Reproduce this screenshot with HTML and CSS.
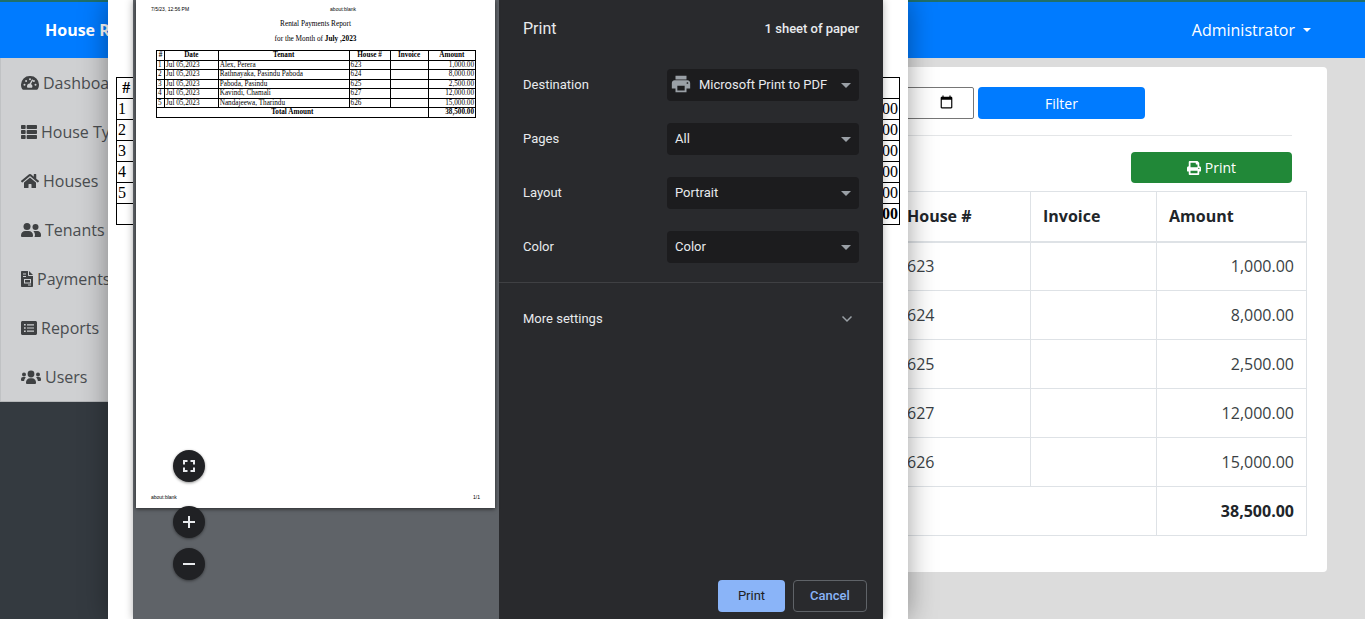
FILE: index.html
```html
<!DOCTYPE html>
<html lang="en">
<head>
    <meta charset="UTF-8">
    <meta name="viewport" content="width=device-width, initial-scale=1.0">
    <title>House Rental Management System</title>
    <link rel="stylesheet" href="styles.css">
</head>
<body>
    <header class="navbar">
        <span class="brand">House Rental Management System</span>
        <span class="user-menu">Administrator<i class="user-caret"></i></span>
    </header>

    <div class="layout">
        <aside class="sidebar">
            <nav class="side-nav">
                <a class="side-item">
                    <svg class="side-icon" width="18" height="16" viewBox="0 0 18 16"><path d="M9 1a8.6 8.6 0 0 0-9 8.700c0 1.700.5 3.200 1.300 4.500.2.300.5.500.9.500h13.600c.4 0 .7-.2.900-.5.800-1.300 1.300-2.800 1.300-4.500A8.600 8.600 0 0 0 9 1zm0 2.300a1 1 0 1 1 0 2 1 1 0 0 1 0-2zM3.500 10.700a1 1 0 1 1 0-2 1 1 0 0 1 0 2zm1.600-3.700a1 1 0 1 1 0-2 1 1 0 0 1 0 2zm6.900 5.700H6.500c-.3-.4-.5-.9-.5-1.400 0-1.500 1.200-2.700 2.700-2.800l2.100-3.700a.7.700 0 0 1 1.200.7l-2 3.600c.8.500 1.400 1.300 1.400 2.200 0 .5-.1 1-.4 1.400zm.9-5.700a1 1 0 1 1 0-2 1 1 0 0 1 0 2zm1.600 3.700a1 1 0 1 1 0-2 1 1 0 0 1 0 2z"/></svg>
                    Dashboard
                </a>
                <a class="side-item">
                    <svg class="side-icon" width="16" height="16" viewBox="0 0 512 512"><path d="M149 216v80c0 13-11 24-24 24H24c-13 0-24-11-24-24v-80c0-13 11-24 24-24h101c13 0 24 11 24 24zM0 376v80c0 13 11 24 24 24h101c13 0 24-11 24-24v-80c0-13-11-24-24-24H24c-13 0-24 11-24 24zM125 32H24C11 32 0 43 0 56v80c0 13 11 24 24 24h101c13 0 24-11 24-24V56c0-13-11-24-24-24zm80 448h283c13 0 24-11 24-24v-80c0-13-11-24-24-24H205c-13 0-24 11-24 24v80c0 13 11 24 24 24zm-24-424v80c0 13 11 24 24 24h283c13 0 24-11 24-24V56c0-13-11-24-24-24H205c-13 0-24 11-24 24zm24 264h283c13 0 24-11 24-24v-80c0-13-11-24-24-24H205c-13 0-24 11-24 24v80c0 13 11 24 24 24z"/></svg>
                    House Types
                </a>
                <a class="side-item">
                    <svg class="side-icon" width="18" height="16" viewBox="0 0 576 512"><path d="M280.370 148.260L96 300.110V464a16 16 0 0 0 16 16l112.060-.29a16 16 0 0 0 15.920-16V368a16 16 0 0 1 16-16h64a16 16 0 0 1 16 16v95.640a16 16 0 0 0 16 16.050L464 480a16 16 0 0 0 16-16V300L295.670 148.260a12.190 12.190 0 0 0-15.300 0zM571.600 251.470L488 182.560V44.050a12 12 0 0 0-12-12h-56a12 12 0 0 0-12 12v72.610L318.470 43a48 48 0 0 0-61 0L4.340 251.470a12 12 0 0 0-1.600 16.900l25.500 31A12 12 0 0 0 45.150 301l235.220-193.740a12.190 12.190 0 0 1 15.300 0L530.900 301a12 12 0 0 0 16.900-1.600l25.500-31a12 12 0 0 0-1.700-16.930z"/></svg>
                    Houses
                </a>
                <a class="side-item">
                    <svg class="side-icon" width="20" height="16" viewBox="0 0 20 16"><circle cx="6" cy="4.500" r="3.500"/><circle cx="14.500" cy="5" r="3"/><path d="M0 13.200C0 10.800 2 9 4.200 9h3.600C10 9 12 10.800 12 13.200V14a1 1 0 0 1-1 1H1a1 1 0 0 1-1-1z"/><path d="M13.500 15h5.500a1 1 0 0 0 1-1v-1.200c0-2-1.500-3.800-3.500-3.800h-3.200c-.3 0-.6.100-.9.200 1 1 1.600 2.400 1.600 4z"/></svg>
                    Tenants
                </a>
                <a class="side-item">
                    <svg class="side-icon" width="12" height="16" viewBox="0 0 12 16"><path fill-rule="evenodd" d="M0 .8C0 .4.300 0 .8 0H7v4c0 .6.400 1 1 1h4v10.200c0 .4-.3.800-.8.800H.8c-.5 0-.8-.4-.8-.8zM2 2.500v1h3v-1zm0 2.500v1h3V5zm1 3v4.500h7V8zm1 1h5v2.500H4zm3 4.500v1h3v-1z"/><path d="M8 0l4 4H8z"/></svg>
                    Payments
                </a>
                <a class="side-item">
                    <svg class="side-icon" width="16" height="16" viewBox="0 0 16 16"><path fill-rule="evenodd" d="M1.500 1h13c.8 0 1.500.7 1.500 1.500v11c0 .8-.7 1.500-1.500 1.500h-13C.7 15 0 14.300 0 13.500v-11C0 1.700.7 1 1.500 1zM3 4v1.600h1.700V4zm3 .2v1.200h7V4.200zM3 7.200v1.600h1.700V7.200zm3 .2v1.200h7V7.400zM3 10.400V12h1.700v-1.600zm3 .2v1.200h7v-1.200z"/></svg>
                    Reports
                </a>
                <a class="side-item">
                    <svg class="side-icon" width="20" height="16" viewBox="0 0 20 16"><circle cx="10" cy="5" r="3.400"/><circle cx="3" cy="5.500" r="2"/><circle cx="17" cy="5.500" r="2"/><path d="M5 13.200C5 11 6.800 9.200 9 9.200h2c2.200 0 4 1.800 4 4V14a1 1 0 0 1-1 1H6a1 1 0 0 1-1-1z"/><path d="M4.800 8.400A3 3 0 0 0 4 8H2a2 2 0 0 0-2 2v1a1 1 0 0 0 1 1h2.100c.2-1.500.8-2.800 1.700-3.600zM15.200 8.400c.2-.2.500-.4.800-.4h2a2 2 0 0 1 2 2v1a1 1 0 0 1-1 1h-2.100c-.2-1.500-.8-2.800-1.700-3.600z"/></svg>
                    Users
                </a>
            </nav>
        </aside>

        <main class="content">
            <section class="card">
                <div class="filter-bar">
                    <input class="month-input" type="month">
                    <button class="btn-filter">Filter</button>
                </div>
                <hr class="card-rule">
                <div class="print-bar">
                    <button class="btn-print">
                        <svg width="14" height="14" viewBox="0 0 512 512" fill="#fff"><path d="M448 192V77.250c0-8.490-3.370-16.620-9.370-22.630L393.370 9.370c-6-6-14.140-9.370-22.630-9.370H96C78.330 0 64 14.330 64 32v160c-35.350 0-64 28.650-64 64v112c0 8.840 7.160 16 16 16h48v96c0 17.670 14.330 32 32 32h320c17.670 0 32-14.330 32-32v-96h48c8.840 0 16-7.160 16-16V256c0-35.350-28.650-64-64-64zm-64 256H128v-96h256v96zm0-224H128V64h192v48c0 8.840 7.160 16 16 16h48v96zm48 72c-13.250 0-24-10.750-24-24 0-13.260 10.750-24 24-24s24 10.740 24 24c0 13.250-10.750 24-24 24z"/></svg>
                        Print
                    </button>
                </div>
                <table class="data-table">
                    <thead>
                        <tr><th class="col-no"></th><th class="col-date"></th><th class="col-tenant"></th><th class="col-house">House #</th><th class="col-invoice">Invoice</th><th class="col-amount">Amount</th></tr>
                    </thead>
                    <tbody>
                        <tr><td></td><td></td><td></td><td>623</td><td></td><td class="num">1,000.00</td></tr>
                        <tr><td></td><td></td><td></td><td>624</td><td></td><td class="num">8,000.00</td></tr>
                        <tr><td></td><td></td><td></td><td>625</td><td></td><td class="num">2,500.00</td></tr>
                        <tr><td></td><td></td><td></td><td>627</td><td></td><td class="num">12,000.00</td></tr>
                        <tr><td></td><td></td><td></td><td>626</td><td></td><td class="num">15,000.00</td></tr>
                        <tr><td class="total" colspan="5"></td><td class="num total">38,500.00</td></tr>
                    </tbody>
                </table>
            </section>
        </main>
    </div>

    <!-- print window opened over the page -->
    <div class="print-window">
        <table class="report-table report-large">
            <thead>
                <tr><th class="r-no">#</th><th class="r-date"></th><th class="r-tenant"></th><th class="r-house"></th><th class="r-invoice"></th><th class="r-amount"></th></tr>
            </thead>
            <tbody>
                <tr><td>1</td><td></td><td></td><td></td><td></td><td class="num">1,000.00</td></tr>
                <tr><td>2</td><td></td><td></td><td></td><td></td><td class="num">8,000.00</td></tr>
                <tr><td>3</td><td></td><td></td><td></td><td></td><td class="num">2,500.00</td></tr>
                <tr><td>4</td><td></td><td></td><td></td><td></td><td class="num">12,000.00</td></tr>
                <tr><td>5</td><td></td><td></td><td></td><td></td><td class="num">15,000.00</td></tr>
                <tr><th colspan="5"></th><th class="num">38,500.00</th></tr>
            </tbody>
        </table>

        <div class="print-dialog">
            <div class="preview">
                <div class="paper">
                    <div class="paper-head"><span>7/5/23, 12:56 PM</span><span class="paper-url">about:blank</span></div>
                    <p class="paper-title">Rental Payments Report</p>
                    <p class="paper-title paper-sub">for the Month of <b>July ,2023</b></p>
                    <table class="report-table report-small">
                        <thead>
                            <tr><th class="r-no">#</th><th class="r-date">Date</th><th class="r-tenant">Tenant</th><th class="r-house">House #</th><th class="r-invoice">Invoice</th><th class="r-amount">Amount</th></tr>
                        </thead>
                        <tbody>
                            <tr><td>1</td><td>Jul 05,2023</td><td>Alex, Perera</td><td>623</td><td></td><td class="num">1,000.00</td></tr>
                            <tr><td>2</td><td>Jul 05,2023</td><td>Rathnayaka, Pasindu Paboda</td><td>624</td><td></td><td class="num">8,000.00</td></tr>
                            <tr><td>3</td><td>Jul 05,2023</td><td>Paboda, Pasindu</td><td>625</td><td></td><td class="num">2,500.00</td></tr>
                            <tr><td>4</td><td>Jul 05,2023</td><td>Kavindi, Chamali</td><td>627</td><td></td><td class="num">12,000.00</td></tr>
                            <tr><td>5</td><td>Jul 05,2023</td><td>Nandajeewa, Tharindu</td><td>626</td><td></td><td class="num">15,000.00</td></tr>
                            <tr><th colspan="5">Total Amount</th><th class="num">38,500.00</th></tr>
                        </tbody>
                    </table>
                    <div class="paper-foot"><span>about:blank</span><span>1/1</span></div>
                </div>
                <button class="zoom-btn zoom-fit">
                    <svg width="16" height="16" viewBox="0 0 16 16" fill="none" stroke="#e8eaed" stroke-width="2"><path d="M3 6.500V3h3.500M9.500 3H13v3.500M13 9.500V13H9.500M6.500 13H3V9.500"/></svg>
                </button>
                <button class="zoom-btn zoom-in">
                    <svg width="16" height="16" viewBox="0 0 16 16" fill="none" stroke="#e8eaed" stroke-width="2"><path d="M8 2v12M2 8h12"/></svg>
                </button>
                <button class="zoom-btn zoom-out">
                    <svg width="16" height="16" viewBox="0 0 16 16" fill="none" stroke="#e8eaed" stroke-width="2"><path d="M2 8h12"/></svg>
                </button>
            </div>

            <div class="settings">
                <div class="settings-head">
                    <h1 class="settings-title">Print</h1>
                    <span class="sheet-count">1 sheet of paper</span>
                </div>
                <div class="settings-rows">
                    <div class="setting-row">
                        <span class="setting-label">Destination</span>
                        <div class="select select-dest">
                            <svg width="22" height="22" viewBox="0 0 24 24" fill="#9aa0a6"><path d="M19 8H5c-1.660 0-3 1.340-3 3v6h4v4h12v-4h4v-6c0-1.660-1.340-3-3-3zm-3 11H8v-5h8v5zm3-7c-.55 0-1-.45-1-1s.45-1 1-1 1 .45 1 1-.45 1-1 1zm-1-9H6v4h12V3z"/></svg>
                            <span>Microsoft Print to PDF</span>
                        </div>
                    </div>
                    <div class="setting-row">
                        <span class="setting-label">Pages</span>
                        <div class="select"><span>All</span></div>
                    </div>
                    <div class="setting-row">
                        <span class="setting-label">Layout</span>
                        <div class="select"><span>Portrait</span></div>
                    </div>
                    <div class="setting-row">
                        <span class="setting-label">Color</span>
                        <div class="select"><span>Color</span></div>
                    </div>
                </div>
                <div class="more-settings">
                    <span>More settings</span>
                    <svg width="12" height="8" viewBox="0 0 12 8" fill="none" stroke="#9aa0a6" stroke-width="1.500"><path d="M1.500 1.500L6 6l4.500-4.500"/></svg>
                </div>
                <div class="settings-foot">
                    <button class="dlg-btn dlg-print">Print</button>
                    <button class="dlg-btn dlg-cancel">Cancel</button>
                </div>
            </div>
        </div>
    </div>
</body>
</html>
```

FILE: styles.css
```css
* {
    box-sizing: border-box;
}
html, body {
    height: 100%;
}
body {
    margin: 0;
    overflow: hidden;
    position: relative;
    background: #dcdcdc;
    color: #212529;
    font-family: "Open Sans", sans-serif;
    font-size: 16px;
}

/* navbar */
.navbar {
    height: 58px;
    display: flex;
    align-items: center;
    justify-content: space-between;
    padding: 0 54px 0 45px;
    background: #007bff;
    border-top: 2px solid #1f6f6b;
    color: #fff;
}
.brand {
    font-weight: 700;
}
.user-menu {
    display: flex;
    align-items: center;
}
.user-caret {
    margin-left: 8px;
    border-top: 4.800px solid #fff;
    border-left: 4.800px solid transparent;
    border-right: 4.800px solid transparent;
}

/* page under the print window */
.layout {
    display: flex;
    height: 561px;
}
.sidebar {
    width: 250px;
    flex: none;
    background: #343a40;
}
.side-nav {
    background: #cfd0d2;
    border-bottom: 1px solid #b5b7b9;
}
.side-item {
    height: 49px;
    display: flex;
    align-items: center;
    gap: 4px;
    padding-left: 21px;
    color: #4a4d50;
    border-left: 1px solid #c0c2c4;
    white-space: nowrap;
}
.side-icon {
    fill: #3f4143;
    margin-left: -1px;
    flex: none;
}
.content {
    flex: 1;
    padding: 9px 38px 0 19px;
}
.card {
    height: 505px;
    padding: 20px;
    background: #fff;
    border-radius: 4px;
}
.filter-bar {
    display: flex;
    gap: 4px;
    padding-left: 411px;
}
.month-input {
    width: 274px;
    height: 32px;
    padding: 0 19px 0 8px;
    border: 1px solid #767676;
    border-radius: 2px;
    font-family: "Open Sans", sans-serif;
    font-size: 14px;
}
.month-input::-webkit-calendar-picker-indicator {
    width: 15px;
    height: 16px;
    padding: 0;
    margin: 0;
}
.btn-filter {
    width: 167px;
    height: 32px;
    background: #007bff;
    color: #fff;
    border: 0;
    border-radius: 4px;
    font-family: "Open Sans", sans-serif;
    font-size: 14px;
}
.card-rule {
    margin: 16px 15px 16px 0;
    border: 0;
    border-top: 1px solid #e4e6e8;
}
.print-bar {
    display: flex;
    justify-content: flex-end;
    padding-right: 15px;
    margin-bottom: 8px;
}
.btn-print {
    width: 161px;
    height: 31px;
    display: flex;
    align-items: center;
    justify-content: center;
    gap: 4px;
    background: #218838;
    color: #fff;
    border: 0;
    border-radius: 4px;
    font-family: "Open Sans", sans-serif;
    font-size: 14px;
}
.data-table {
    width: 1017px;
    table-layout: fixed;
    border-collapse: collapse;
}
.data-table th, .data-table td {
    height: 49px;
    padding: 0 12px;
    border: 1px solid #dee2e6;
    text-align: left;
    color: #212529;
}
.data-table td {
    color: #3a3f44;
}
.data-table thead th {
    height: 50px;
    border-bottom-width: 2px;
}
.data-table .num {
    text-align: right;
}
.data-table .total {
    font-weight: 700;
    color: #212529;
}
.col-no { width: 40px; }
.col-date { width: 160px; }
.col-tenant { width: 405px; }
.col-house { width: 136px; }
.col-invoice { width: 126px; }
.col-amount { width: 150px; }

/* print window */
.print-window {
    position: absolute;
    top: 0;
    left: 108px;
    width: 800px;
    height: 619px;
    padding: 77px 8px 0;
    background: #fff;
    box-shadow: 0 0 26px rgba(0, 0, 0, .38);
}
.report-table {
    width: 100%;
    table-layout: fixed;
    border-collapse: collapse;
    font-family: "Liberation Serif", serif;
    color: #000;
}
.report-table th, .report-table td {
    border: 1px solid #000;
    white-space: nowrap;
}
.report-table .num {
    text-align: right;
}
.report-large {
    font-size: 16px;
}
.report-large th, .report-large td {
    height: 21px;
    padding: 1px;
    line-height: 18px;
}
.report-small {
    width: 320px;
    margin-left: 5px;
    font-size: 7.200px;
}
.report-small th, .report-small td {
    height: 9.500px;
    padding: 0 1px;
    line-height: 8px;
}
.r-no { width: 2.500%; }
.r-date { width: 16.800%; }
.r-tenant { width: 40.900%; }
.r-house { width: 12.800%; }
.r-invoice { width: 11.900%; }
.r-amount { width: 14.800%; }

.print-dialog {
    position: absolute;
    top: 0;
    left: 25px;
    width: 750px;
    height: 619px;
    display: flex;
    box-shadow: 0 0 8px rgba(0, 0, 0, .3);
}
.preview {
    position: relative;
    width: 366px;
    flex: none;
    background: #5f6368;
    padding-left: 3px;
}
.paper {
    width: 359px;
    height: 508px;
    display: flex;
    flex-direction: column;
    padding: 6px 15px 8px;
    background: #fff;
    box-shadow: 0 1px 4px rgba(0, 0, 0, .6);
    color: #000;
}
.paper-head, .paper-foot {
    display: flex;
    font-family: "Liberation Sans", sans-serif;
    font-size: 5px;
    line-height: 6px;
}
.paper-url {
    margin-left: 141px;
}
.paper-foot {
    margin-top: auto;
    justify-content: space-between;
}
.paper-title {
    margin: 7px 0 0;
    text-align: center;
    font-family: "Liberation Serif", serif;
    font-size: 7.300px;
    line-height: 9px;
}
.paper-sub {
    margin-top: 6px;
    margin-bottom: 7px;
}
.zoom-btn {
    position: absolute;
    left: 40px;
    width: 32px;
    height: 32px;
    display: flex;
    align-items: center;
    justify-content: center;
    padding: 0;
    border: 0;
    border-radius: 50%;
    background: #202124;
    box-shadow: 0 1px 3px rgba(0, 0, 0, .45);
}
.zoom-fit { top: 450px; }
.zoom-in { top: 506px; }
.zoom-out { top: 548px; }

.settings {
    flex: 1;
    display: flex;
    flex-direction: column;
    background: #292a2d;
    color: #e8eaed;
    font-family: Roboto, sans-serif;
    font-size: 13px;
}
.settings-head {
    height: 69px;
    display: flex;
    justify-content: space-between;
    padding: 20px 24px 0;
}
.settings-title {
    margin: 0;
    font-size: 16px;
    font-weight: 400;
    line-height: 18px;
}
.sheet-count {
    font-weight: 500;
    line-height: 18px;
}
.settings-rows {
    display: flex;
    flex-direction: column;
    gap: 22px;
    padding: 0 24px 19px;
    border-bottom: 1px solid #3f4043;
}
.setting-row {
    display: flex;
    align-items: center;
    justify-content: space-between;
}
.setting-label {
    margin-bottom: 2px;
}
.select {
    position: relative;
    width: 192px;
    height: 32px;
    display: flex;
    align-items: center;
    padding: 0 0 2px 8px;
    background: #1c1c1e;
    border-radius: 4px;
}
.select::after {
    content: "";
    position: absolute;
    top: 14px;
    right: 8px;
    border-top: 5px solid #9aa0a6;
    border-left: 5px solid transparent;
    border-right: 5px solid transparent;
}
.select-dest {
    gap: 7px;
    padding-left: 3px;
}
.more-settings {
    display: flex;
    align-items: center;
    justify-content: space-between;
    padding: 28px 30px 0 24px;
    line-height: 16px;
}
.settings-foot {
    margin-top: auto;
    display: flex;
    justify-content: flex-end;
    gap: 8px;
    padding: 0 16px 7px;
}
.dlg-btn {
    height: 32px;
    padding: 0 0 2px;
    border-radius: 4px;
    font-family: Roboto, sans-serif;
    font-size: 13px;
}
.dlg-print {
    width: 67px;
    background: #8ab4f8;
    border: 0;
    color: #202124;
    font-weight: 400;
}
.dlg-cancel {
    width: 74px;
    background: transparent;
    border: 1px solid #5f6368;
    color: #8ab4f8;
    font-weight: 500;
}
```
